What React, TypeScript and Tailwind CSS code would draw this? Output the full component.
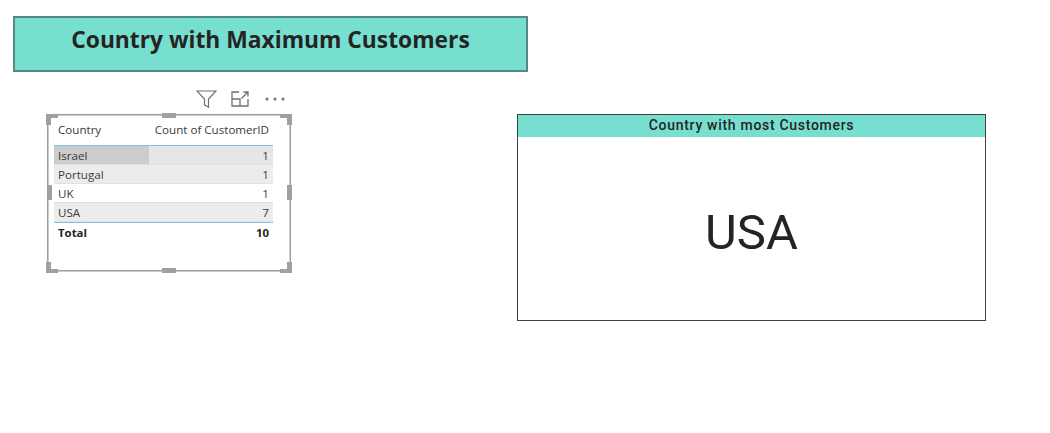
const OPEN = "font-['Open_Sans','Noto_Sans',sans-serif]";

const rows = [
  { name: "Israel", value: "1", left: "bg-[#cccccc]", right: "bg-[#e6e6e6]" },
  { name: "Portugal", value: "1", left: "bg-[#ececec]", right: "bg-[#ececec]" },
  { name: "UK", value: "1", left: "bg-white", right: "bg-white" },
  { name: "USA", value: "7", left: "bg-[#ececec]", right: "bg-[#ececec]" },
];

function SelectionFrame() {
  const c = "#a0a0a0";
  return (
    <svg className="absolute -top-px -left-px pointer-events-none" width="247" height="160" viewBox="0 0 247 160" fill={c}>
      <rect x="1.75" y="1.75" width="242.5" height="156" fill="none" stroke="#a0a0a0" strokeWidth="1.6" />
      <path d="M0 1h12v4H5v7H0zM246 1h-12v4h7v7h5zM0 160h12v-4H5v-7H0zM246 160h-12v-4h7v-7h5z" />
      <rect x="116" y="0" width="14" height="5" />
      <rect x="116" y="155" width="14" height="5" />
      <rect x="1" y="72" width="5" height="15" />
      <rect x="241" y="72" width="5" height="15" />
    </svg>
  );
}

export default function App() {
  return (
    <div className={`w-[1050px] h-[433px] bg-white overflow-hidden pt-4 pl-[13px] ${OPEN}`}>
      <div className="w-[515px] h-[56px] bg-[#76dfd0] border-2 border-[#558a84] flex justify-center pt-[7px]">
        <span className="text-[22.8px] leading-[30px] font-bold text-[#252423]">Country with Maximum Customers</span>
      </div>
      <div className="flex items-start mt-[42px] ml-[34px]">
        <div className="relative w-[245px] h-[158px] pt-[6px] pl-[7px]">
          <div className="absolute -top-[24px] left-[149px] flex items-center">
            <svg width="21" height="18" viewBox="0 0 21 18" fill="none" stroke="#707070" strokeWidth="1.2">
              <path d="M1 1h19l-7.5 8v8.2l-4-2.4V9z" />
            </svg>
            <svg className="ml-[14px]" width="18" height="16" viewBox="0 0 18 16" fill="none" stroke="#707070" strokeWidth="1.3">
              <path d="M8 1H1v14h16V8" />
              <path d="M1 8h8v7" />
              <path d="M10.5 7.5L17 1M12.5 1H17v4.5" />
            </svg>
            <svg className="ml-[16px]" width="20" height="4" viewBox="0 0 20 4" fill="#707070">
              <circle cx="2" cy="2" r="1.5" />
              <circle cx="10" cy="2" r="1.5" />
              <circle cx="18" cy="2" r="1.5" />
            </svg>
          </div>
          <SelectionFrame />
          <div className="w-[219px] text-[11.6px] text-[#3a3a3a]">
            <div className="flex justify-between h-[26px] px-1 pt-[2px] leading-[15px] border-b border-[#7ec3ee]">
              <span>Country</span>
              <span>Count of CustomerID</span>
            </div>
            {rows.map((r) => (
              <div key={r.name} className="flex h-[19px] border-b border-[#e2e2e2] last:border-b-0">
                <div className={`w-[95px] pl-1 leading-[20px] ${r.left}`}>{r.name}</div>
                <div className={`flex-1 pr-1 text-right leading-[20px] ${r.right}`}>{r.value}</div>
              </div>
            ))}
            <div className="flex justify-between h-[20px] px-1 pt-px leading-[17px] border-t border-[#7ec3ee] font-bold text-[11.4px] text-[#252423]">
              <span>Total</span>
              <span>10</span>
            </div>
          </div>
        </div>
        <div className="ml-[225px] w-[469px] h-[207px] border border-[#404040] bg-white flex flex-col">
          <div className="h-[22px] bg-[#76dfd0] text-center text-[14px] leading-[21px] font-medium tracking-[0.7px] text-[#252423] font-['Roboto',sans-serif]">
            Country with most Customers
          </div>
          <div className="flex-1 flex items-center justify-center text-[49px] text-[#252423] font-['Roboto',sans-serif] pt-[8px]">
            USA
          </div>
        </div>
      </div>
    </div>
  );
}
